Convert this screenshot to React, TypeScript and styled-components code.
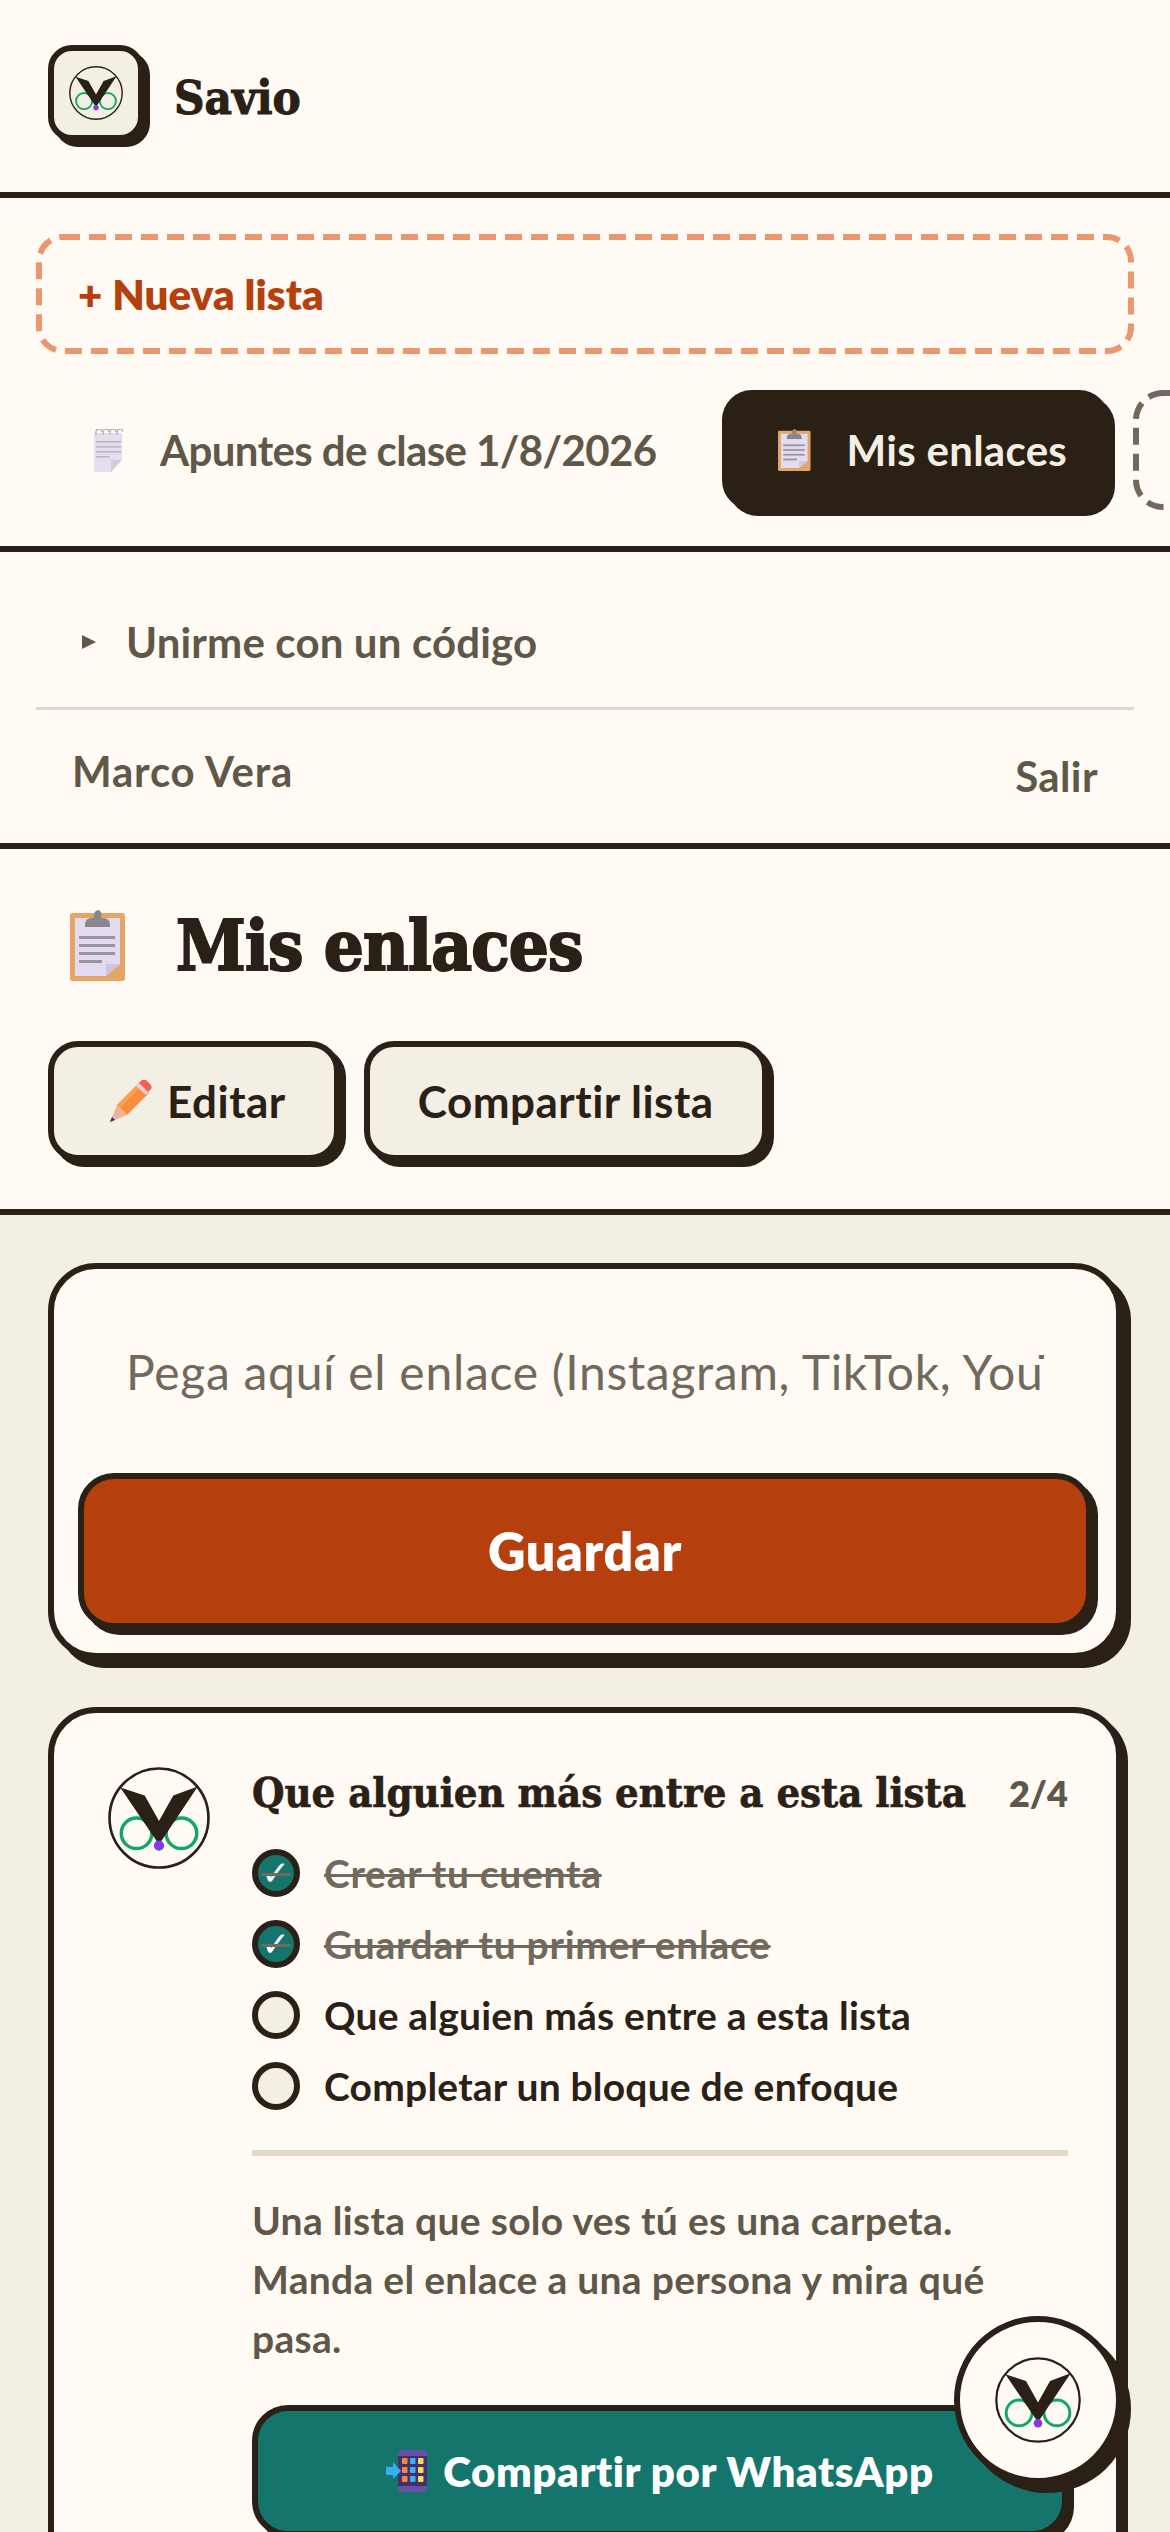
import React from "react";
import styled, { createGlobalStyle } from "styled-components";

const DARK = "#2a2016";
const CREAM = "#fffbf4";
const SAND = "#f4efe4";
const MUTED = "#5f5748";
const FAINT = "#716a5c";
const RUST = "#b5400d";
const TEAL = "#13756b";

const SANS = `Lato, "Liberation Sans", sans-serif`;
const SERIF = `"DejaVu Serif Condensed", "DejaVu Serif", serif`;

const GlobalStyle = createGlobalStyle`
  html, body {
    margin: 0;
    padding: 0;
    height: 100%;
    overflow: hidden;
    background: ${SAND};
  }
  #root {
    height: 100%;
  }
  * {
    box-sizing: border-box;
  }
`;

const Page = styled.div`
  height: 2532px;
  overflow: hidden;
  position: relative;
  font-family: ${SANS};
  font-variant-ligatures: none;
  color: ${DARK};
`;

const TopBar = styled.header`
  display: flex;
  align-items: center;
  gap: 30px;
  height: 198px;
  padding: 0 48px 6px;
  background: ${CREAM};
  border-bottom: 6px solid ${DARK};
`;

const LogoBox = styled.div`
  width: 96px;
  height: 96px;
  display: flex;
  align-items: center;
  justify-content: center;
  background: ${SAND};
  border: 6px solid ${DARK};
  border-radius: 24px;
  box-shadow: 6px 6px 0 ${DARK};
`;

const Brand = styled.span`
  margin-top: 8px;
  font-family: ${SERIF};
  font-weight: 700;
  font-size: 47px;
  -webkit-text-stroke: 1px ${DARK};
`;

const ListsPanel = styled.section`
  display: flex;
  flex-direction: column;
  gap: 36px;
  height: 354px;
  padding: 36px 0 0 36px;
  background: ${CREAM};
  border-bottom: 6px solid ${DARK};
`;

const NewList = styled.button`
  position: relative;
  display: block;
  flex: none;
  width: 1098px;
  height: 120px;
  padding: 0 0 0 42px;
  text-align: left;
  background: transparent;
  border: none;
  font-family: ${SANS};
  font-weight: 800;
  font-size: 42px;
  letter-spacing: 0.1px;
  color: ${RUST};
`;

const DashedOutline = styled.svg<{ $color: string }>`
  position: absolute;
  inset: 0;
  width: 100%;
  height: 100%;
  fill: none;
  stroke: ${(p) => p.$color};
  stroke-width: 6;
  stroke-dasharray: 17 9;
`;

const TabStrip = styled.div`
  display: flex;
  gap: 24px;
  overflow: hidden;
  padding-bottom: 6px;
`;

const Tab = styled.div<{ $active?: boolean }>`
  flex: none;
  display: flex;
  align-items: center;
  gap: 28px;
  height: 120px;
  padding: 0 36px 0 42px;
  border: 6px solid ${(p) => (p.$active ? DARK : "transparent")};
  border-radius: 30px;
  background: ${(p) => (p.$active ? DARK : "transparent")};
  box-shadow: ${(p) => (p.$active ? `6px 6px 0 ${DARK}` : "none")};
  color: ${(p) => (p.$active ? SAND : MUTED)};
  font-weight: 700;
  font-size: 42px;
  letter-spacing: ${(p) => (p.$active ? "0.3px" : "-0.6px")};
`;

const GhostTab = styled.div`
  position: relative;
  flex: none;
  width: 300px;
  height: 120px;
`;

const TabIcon = styled.span`
  width: 48px;
  display: flex;
  justify-content: center;
`;

const AccountPanel = styled.section`
  height: 297px;
  padding: 0 36px;
  background: ${CREAM};
  border-bottom: 6px solid ${DARK};
`;

const JoinRow = styled.div`
  display: flex;
  align-items: center;
  gap: 30px;
  height: 158px;
  padding: 24px 0 0 46px;
  border-bottom: 3px solid #e0d9c8;
  font-weight: 700;
  font-size: 42px;
  letter-spacing: 0.15px;
  color: ${MUTED};
`;

const Caret = styled.span`
  width: 0;
  height: 0;
  border-left: 14px solid ${MUTED};
  border-top: 7px solid transparent;
  border-bottom: 7px solid transparent;
`;

const UserRow = styled.div`
  display: flex;
  justify-content: space-between;
  align-items: center;
  height: 122px;
  padding: 0 36px;
  font-weight: 700;
  font-size: 42px;
  letter-spacing: 0.8px;
  color: ${MUTED};
`;

const SignOut = styled.span`
  margin-top: 10px;
  font-weight: 700;
  letter-spacing: 0.4px;
`;

const ListHead = styled.section`
  display: flex;
  flex-direction: column;
  gap: 36px;
  height: 366px;
  padding: 36px 48px 0;
  background: ${CREAM};
  border-bottom: 6px solid ${DARK};
`;

const TitleRow = styled.div`
  display: flex;
  align-items: center;
  height: 120px;
  gap: 29px;
`;

const TitleIcon = styled.span`
  width: 99px;
  display: flex;
  justify-content: center;
`;

const Title = styled.h1`
  margin: 0;
  font-family: ${SERIF};
  font-weight: 700;
  font-size: 70px;
  letter-spacing: -0.8px;
  -webkit-text-stroke: 2px ${DARK};
`;

const HeadActions = styled.div`
  display: flex;
  gap: 24px;
`;

const SoftButton = styled.button`
  display: flex;
  align-items: center;
  gap: 15px;
  height: 120px;
  padding: 0 48px;
  background: ${SAND};
  border: 6px solid ${DARK};
  border-radius: 30px;
  box-shadow: 6px 6px 0 ${DARK};
  font-family: ${SANS};
  font-weight: 700;
  font-size: 44px;
  letter-spacing: 0.5px;
  color: ${DARK};
`;

const PencilSlot = styled.span`
  display: flex;
  margin-left: 8px;
`;

const Feed = styled.main`
  display: flex;
  flex-direction: column;
  gap: 48px;
  padding: 48px 48px 0;
`;

const Card = styled.section<{ $shadow: number }>`
  background: ${CREAM};
  border: 6px solid ${DARK};
  border-radius: 48px;
  box-shadow: ${(p) => `${p.$shadow}px ${p.$shadow}px 0 ${DARK}`};
`;

const SaveForm = styled.form`
  display: flex;
  flex-direction: column;
  gap: 24px;
  padding: 24px;
`;

const LinkInput = styled.input`
  width: 100%;
  height: 156px;
  padding: 0 48px;
  border: none;
  outline: none;
  background: transparent;
  font-family: ${SANS};
  font-size: 48px;
  font-weight: 400;
  letter-spacing: 0.7px;
  &::placeholder {
    color: ${FAINT};
    opacity: 1;
  }
`;

const PrimaryButton = styled.button<{ $bg: string; $size: number; $height: number }>`
  display: flex;
  align-items: center;
  justify-content: center;
  gap: 16px;
  width: 100%;
  height: ${(p) => p.$height}px;
  background: ${(p) => p.$bg};
  border: 6px solid ${DARK};
  border-radius: 36px;
  box-shadow: 6px 6px 0 ${DARK};
  font-family: ${SANS};
  font-weight: 800;
  font-size: ${(p) => p.$size}px;
  letter-spacing: 0.6px;
  color: #fff;
`;

const Onboarding = styled.div`
  display: flex;
  gap: 42px;
  padding: 54px 48px 0 54px;
  height: 900px;
`;

const Steps = styled.div`
  flex: 1;
  min-width: 0;
`;

const StepsHead = styled.div`
  display: flex;
  justify-content: space-between;
  align-items: center;
  margin-bottom: 30px;
`;

const StepsTitle = styled.h2`
  margin: 0;
  font-family: ${SERIF};
  font-weight: 700;
  font-size: 41.5px;
  letter-spacing: -0.05px;
  line-height: 52px;
  -webkit-text-stroke: 0.6px ${DARK};
`;

const StepsCount = styled.span`
  font-weight: 800;
  font-size: 36px;
  color: ${MUTED};
`;

const StepList = styled.ul`
  display: flex;
  flex-direction: column;
  gap: 23px;
  margin: 0;
  padding: 0;
  list-style: none;
`;

const Step = styled.li<{ $done?: boolean }>`
  display: flex;
  align-items: center;
  gap: 24px;
  height: 48px;
  font-weight: 700;
  font-size: 39px;
  letter-spacing: ${(p) => (p.$done ? "0.7px" : "0.2px")};
  color: ${(p) => (p.$done ? FAINT : DARK)};
  text-decoration: ${(p) => (p.$done ? "line-through" : "none")};
  text-decoration-thickness: 3px;
`;

const StepMark = styled.span<{ $done?: boolean }>`
  flex: none;
  width: 48px;
  height: 48px;
  display: flex;
  align-items: center;
  justify-content: center;
  border: 6px solid ${DARK};
  border-radius: 50%;
  background: ${(p) => (p.$done ? TEAL : SAND)};
  color: #fff;
  font-family: "DejaVu Sans", sans-serif;
  font-weight: 700;
  font-size: 34px;
  line-height: 1;
`;

const Rule = styled.hr`
  height: 6px;
  margin: 40px 0 35px;
  border: none;
  background: #e0d9c8;
`;

const Blurb = styled.p`
  margin: 0 0 37px;
  font-weight: 700;
  font-size: 39px;
  line-height: 59px;
  letter-spacing: 0.3px;
  color: ${MUTED};
`;

const Fab = styled.button`
  position: fixed;
  right: 48px;
  bottom: 48px;
  width: 168px;
  height: 168px;
  display: flex;
  align-items: center;
  justify-content: center;
  padding: 0;
  background: ${CREAM};
  border: 6px solid ${DARK};
  border-radius: 50%;
  box-shadow: 9px 9px 0 ${DARK};
`;

function SavioMark({ size }: { size: number }) {
  return (
    <svg width={size} height={size} viewBox="0 0 100 100">
      <circle cx="50" cy="50" r="48.5" fill="none" stroke={DARK} strokeWidth="2.6" />
      <circle cx="28" cy="65" r="15" fill="none" stroke="#10a868" strokeWidth="3.4" />
      <circle cx="72" cy="65" r="15" fill="none" stroke="#10a868" strokeWidth="3.4" />
      <path d="M12 20 L36 28 L50 53 L64 28 L88 19 L50 76 Z" fill={DARK} />
      <circle cx="50" cy="77" r="5" fill="#7c3aed" />
    </svg>
  );
}

function ClipboardIcon({ height }: { height: number }) {
  return (
    <svg width={(height * 55) / 71} height={height} viewBox="0 0 55 71">
      <rect x="0" y="3" width="55" height="68" rx="2.5" fill="#e6a565" />
      <path d="M5 8 H50 V54 L36 66 H5 Z" fill="#e3dcf0" />
      <path d="M36 66 V54 H50 Z" fill="#cfc6de" />
      <path d="M15 15 Q15 8 22 8 H24 Q23 1 28 0 Q33 1 31 8 H33 Q40 8 40 15 V17 H15 Z" fill="#8b8590" />
      <rect x="9" y="26" width="36" height="3" fill="#98949e" />
      <rect x="9" y="34" width="36" height="3" fill="#98949e" />
      <rect x="9" y="42" width="36" height="3" fill="#98949e" />
      <rect x="9" y="50" width="23" height="3" fill="#98949e" />
    </svg>
  );
}

function NotepadIcon() {
  return (
    <svg width="30" height="43" viewBox="0 0 30 43" opacity="0.75">
      <path d="M1 4 H29 V31 L18 43 H1 Z" fill="#ddd5ec" />
      <path d="M18 43 V31 H29 Z" fill="#c4bcd2" />
      {[3, 10, 17, 24].map((x) => (
        <path key={x} d="M0 6 V3 Q0 0 3 0 T6 3" transform={`translate(${x} 0)`} fill="none" stroke="#9f9aa6" strokeWidth="1.4" />
      ))}
      <rect x="3" y="12" width="25" height="1.6" fill="#a6a1ad" />
      <rect x="3" y="17" width="25" height="1.6" fill="#a6a1ad" />
      <rect x="3" y="22" width="25" height="1.6" fill="#a6a1ad" />
      <rect x="3" y="27" width="14" height="1.6" fill="#a6a1ad" />
    </svg>
  );
}

function PencilIcon() {
  return (
    <svg width="42" height="42" viewBox="0 0 42 42">
      <path d="M7 25 L29 3 L39 13 L17 35 Z" fill="#fb8c3a" />
      <path d="M7 25 L29 3 L32 6 L10 28 Z" fill="#fca050" />
      <path d="M26 6 L33 -1 L36 2 L42 8 L36 15 Z" fill="#dcd3e6" />
      <path d="M32 0 Q34 -1 36 0 L41 5 Q42 7 41 9 L38 12 L29 3 Z" fill="#f8604a" />
      <path d="M7 25 L17 35 L0 42 Z" fill="#e8b896" />
      <path d="M2 37 L5 40 L0 42 Z" fill="#4b1f6f" />
    </svg>
  );
}

function PhoneIcon() {
  const colors = ["#f5873c", "#35b4ee", "#f7dc54"];
  return (
    <svg width="41" height="42" viewBox="0 0 41 42">
      <rect x="12" y="0" width="29" height="42" rx="4" fill="#6a50a5" />
      <rect x="12" y="6" width="29" height="30" fill="#45306f" />
      {[8, 17, 26].map((y) =>
        [16, 24, 32].map((x, i) => (
          <rect key={`${x}-${y}`} x={x} y={y} width="5.5" height="6" rx="1" fill={colors[i]} />
        ))
      )}
      <path d="M0 17 H7 V12 L15 21 L7 29 V25 H0 Z" fill="#38aef0" />
    </svg>
  );
}

export default function App() {
  return (
    <Page>
      <GlobalStyle />
      <TopBar>
        <LogoBox>
          <SavioMark size={54} />
        </LogoBox>
        <Brand>Savio</Brand>
      </TopBar>

      <ListsPanel>
        <NewList>
          <DashedOutline $color="#ec9670" viewBox="0 0 1098 120">
            <rect x="3" y="3" width="1092" height="114" rx="24" />
          </DashedOutline>
          + Nueva lista
        </NewList>
        <TabStrip>
          <Tab>
            <TabIcon>
              <NotepadIcon />
            </TabIcon>
            Apuntes de clase 1/8/2026
          </Tab>
          <Tab $active>
            <TabIcon>
              <ClipboardIcon height={42} />
            </TabIcon>
            Mis enlaces
          </Tab>
          <GhostTab>
            <DashedOutline $color={FAINT} viewBox="0 0 300 120">
              <rect x="3" y="3" width="294" height="114" rx="27" />
            </DashedOutline>
          </GhostTab>
        </TabStrip>
      </ListsPanel>

      <AccountPanel>
        <JoinRow>
          <Caret />
          Unirme con un código
        </JoinRow>
        <UserRow>
          Marco Vera
          <SignOut>Salir</SignOut>
        </UserRow>
      </AccountPanel>

      <ListHead>
        <TitleRow>
          <TitleIcon>
            <ClipboardIcon height={71} />
          </TitleIcon>
          <Title>Mis enlaces</Title>
        </TitleRow>
        <HeadActions>
          <SoftButton>
            <PencilSlot>
              <PencilIcon />
            </PencilSlot>
            Editar
          </SoftButton>
          <SoftButton>Compartir lista</SoftButton>
        </HeadActions>
      </ListHead>

      <Feed>
        <Card $shadow={9}>
          <SaveForm>
            <LinkInput readOnly placeholder="Pega aquí el enlace (Instagram, TikTok, YouTube...)" />
            <PrimaryButton type="button" $bg={RUST} $size={52} $height={156}>
              Guardar
            </PrimaryButton>
          </SaveForm>
        </Card>

        <Card $shadow={6}>
          <Onboarding>
            <div>
              <SavioMark size={102} />
            </div>
            <Steps>
              <StepsHead>
                <StepsTitle>Que alguien más entre a esta lista</StepsTitle>
                <StepsCount>2/4</StepsCount>
              </StepsHead>
              <StepList>
                <Step $done>
                  <StepMark $done>✓</StepMark>
                  Crear tu cuenta
                </Step>
                <Step $done>
                  <StepMark $done>✓</StepMark>
                  Guardar tu primer enlace
                </Step>
                <Step>
                  <StepMark />
                  Que alguien más entre a esta lista
                </Step>
                <Step>
                  <StepMark />
                  Completar un bloque de enfoque
                </Step>
              </StepList>
              <Rule />
              <Blurb>
                Una lista que solo ves tú es una carpeta. Manda el enlace a una persona y mira qué pasa.
              </Blurb>
              <PrimaryButton type="button" $bg={TEAL} $size={42} $height={132}>
                <PhoneIcon />
                Compartir por WhatsApp
              </PrimaryButton>
            </Steps>
          </Onboarding>
        </Card>
      </Feed>

      <Fab>
        <SavioMark size={86} />
      </Fab>
    </Page>
  );
}
